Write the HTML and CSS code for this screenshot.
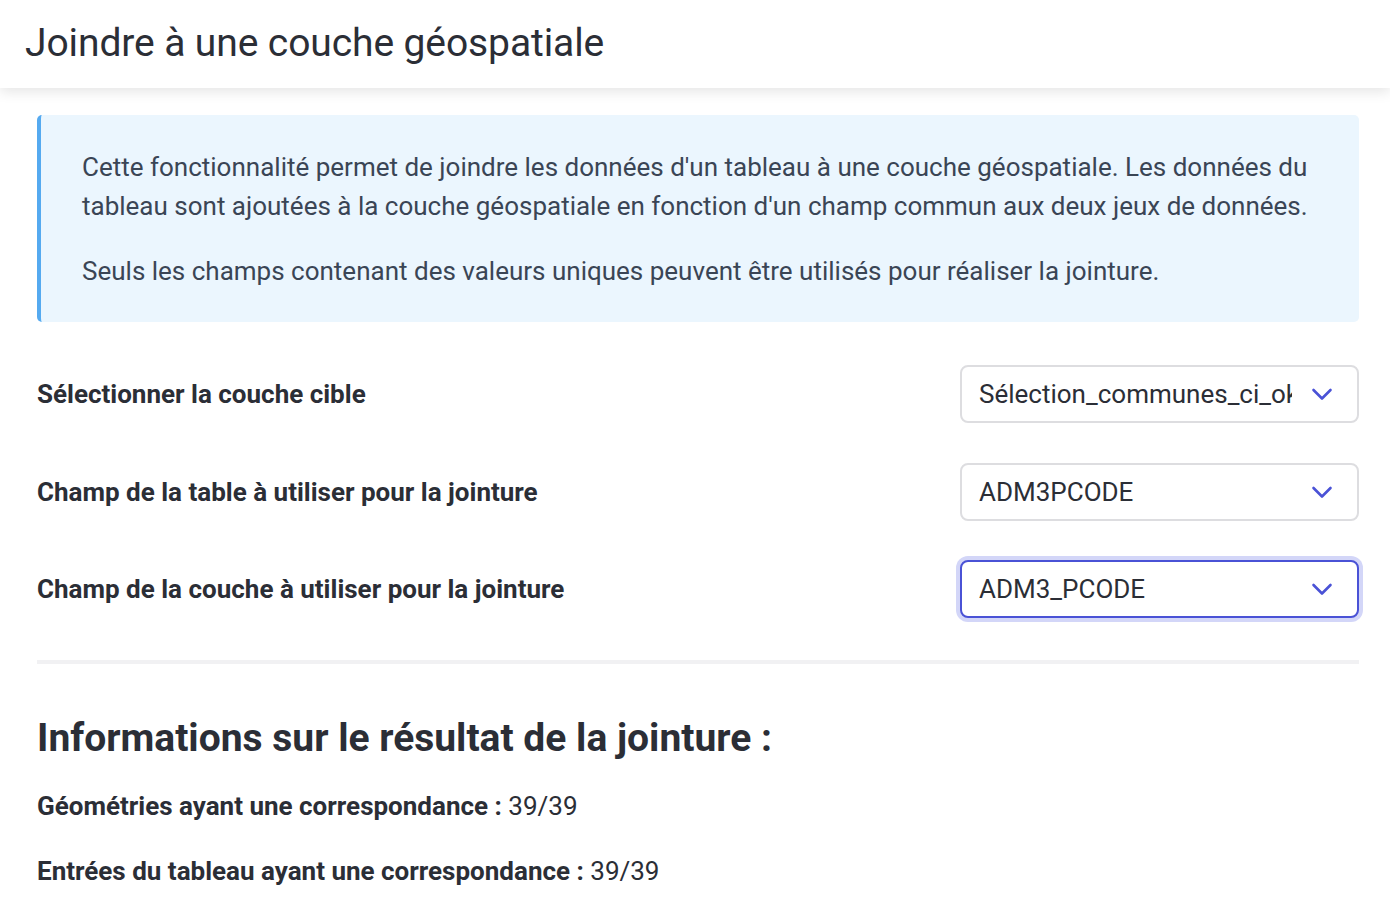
FILE: index.html
```html
<!DOCTYPE html>
<html lang="fr">
<head>
<meta charset="utf-8">
<title>Joindre à une couche géospatiale</title>
<link rel="stylesheet" href="styles.css">
</head>
<body>
<header class="header">
  <h1 class="title">Joindre à une couche géospatiale</h1>
</header>
<main class="content">
  <div class="info">
    <p>Cette fonctionnalité permet de joindre les données d'un tableau à une couche géospatiale. Les données du tableau sont ajoutées à la couche géospatiale en fonction d'un champ commun aux deux jeux de données.</p>
    <p>Seuls les champs contenant des valeurs uniques peuvent être utilisés pour réaliser la jointure.</p>
  </div>
  <div class="fields">
    <div class="row">
      <label class="label">Sélectionner la couche cible</label>
      <div class="select">
        <span class="value">Sélection_communes_ci_ok</span>
        <svg class="chev" viewBox="0 0 24 24" width="24" height="24"><path d="M3.5 8l8.5 8.5 8.5-8.5" fill="none" stroke="#4a52d6" stroke-width="2.6" stroke-linecap="round" stroke-linejoin="round"/></svg>
      </div>
    </div>
    <div class="row">
      <label class="label">Champ de la table à utiliser pour la jointure</label>
      <div class="select">
        <span class="value">ADM3PCODE</span>
        <svg class="chev" viewBox="0 0 24 24" width="24" height="24"><path d="M3.5 8l8.5 8.5 8.5-8.5" fill="none" stroke="#4a52d6" stroke-width="2.6" stroke-linecap="round" stroke-linejoin="round"/></svg>
      </div>
    </div>
    <div class="row">
      <label class="label">Champ de la couche à utiliser pour la jointure</label>
      <div class="select focused">
        <span class="value">ADM3_PCODE</span>
        <svg class="chev" viewBox="0 0 24 24" width="24" height="24"><path d="M3.5 8l8.5 8.5 8.5-8.5" fill="none" stroke="#4a52d6" stroke-width="2.6" stroke-linecap="round" stroke-linejoin="round"/></svg>
      </div>
    </div>
  </div>
  <hr class="divider">
  <h2 class="result-title">Informations sur le résultat de la jointure :</h2>
  <p class="stat"><strong>Géométries ayant une correspondance :</strong> 39/39</p>
  <p class="stat"><strong>Entrées du tableau ayant une correspondance :</strong> 39/39</p>
</main>
</body>
</html>
```
FILE: styles.css
```css
* { box-sizing: border-box; }
html, body { margin: 0; padding: 0; }
body {
  font-family: Roboto, "Noto Sans", "Liberation Sans", sans-serif;
  color: #2b2e36;
  background: #ffffff;
  width: 1390px;
  height: 910px;
  overflow: hidden;
}
.header {
  height: 88px;
  background: #fff;
  box-shadow: 0 4px 12px rgba(0,0,0,0.10);
  display: flex;
  align-items: center;
  padding-left: 25px;
  position: relative;
  z-index: 1;
}
.title {
  margin: 0;
  font-weight: 400;
  font-size: 39px;
  letter-spacing: -0.1px;
  color: #2b2e36;
  padding-bottom: 3px;
}
.content {
  padding: 27px 31px 0 37px;
}
.info {
  background: #ebf6fe;
  border-left: 4px solid #55aaf0;
  border-radius: 5px;
  padding: 33px 30px 31px 41px;
  color: #3a4555;
  font-size: 26px;
  line-height: 39px;
}
.info p { margin: 0; }
.info p + p { margin-top: 26px; }
.fields {
  display: flex;
  flex-direction: column;
  gap: 39.5px;
  margin-top: 43px;
}
.row {
  display: flex;
  align-items: center;
  justify-content: space-between;
}
.label {
  font-weight: 700;
  font-size: 26px;
  color: #2b2e36;
}
.select {
  width: 399px;
  height: 58px;
  border: 2px solid #dddde0;
  border-radius: 8px;
  display: flex;
  align-items: center;
  padding: 0 23px 0 17px;
  gap: 18px;
  background: #fff;
}
.select.focused {
  border-color: #4a52d6;
  box-shadow: 0 0 0 4px #d3d6f8;
}
.value {
  flex: 1;
  font-size: 26px;
  color: #2b2e36;
  white-space: nowrap;
  overflow: hidden;
}
.chev { flex: none; }
.divider {
  border: 0;
  height: 4px;
  background: #f1f1f3;
  margin: 42px 0 0 0;
}
.result-title {
  margin: 50px 0 0 0;
  font-size: 39px;
  font-weight: 700;
  color: #2b2e36;
  line-height: 48px;
}
.stat {
  margin: 0;
  font-size: 26px;
  line-height: 30px;
  color: #2b2e36;
}
.result-title + .stat { margin-top: 29px; }
.stat + .stat { margin-top: 35px; }
.stat strong { font-weight: 700; }
```
